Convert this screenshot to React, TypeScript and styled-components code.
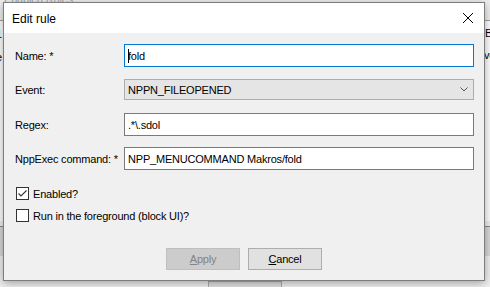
import styled, { createGlobalStyle } from "styled-components";

const GlobalStyle = createGlobalStyle`
    html, body {
        margin: 0;
        padding: 0;
        width: 490px;
        height: 287px;
        overflow: hidden;
        background: #f0f0f0;
        font-family: "Segoe UI", "Liberation Sans", sans-serif;
        font-size: 11px;
        letter-spacing: -0.2px;
        color: #000;
    }
`;

const Screen = styled.div`
    position: relative;
    width: 490px;
    height: 287px;
    overflow: hidden;
    background: #f0f0f0;
`;

// parent window fragments peeking from behind the dialog
const Behind = styled.div`
    position: absolute;
    inset: 0;
`;

const BehindText = styled.span<{ $x: number; $y: number; $color?: string }>`
    position: absolute;
    left: ${p => p.$x}px;
    top: ${p => p.$y}px;
    color: ${p => p.$color || "#000"};
    white-space: nowrap;
    line-height: 14px;
`;

const BehindLine = styled.div<{ $y: number }>`
    position: absolute;
    left: 0;
    right: 0;
    top: ${p => p.$y}px;
    height: 1px;
    background: #8a8a8a;
`;

const BehindPanel = styled.div`
    position: absolute;
    left: 0;
    top: 227px;
    width: 100%;
    height: 29px;
    background: #d9d9d9;
`;

const BehindList = styled.div`
    position: absolute;
    left: 0;
    top: 20px;
    width: 100%;
    height: 200px;
    background: #fff;
    border-top: 1px solid #a0a0a0;
`;

const BehindButton = styled.div`
    position: absolute;
    left: 208px;
    top: 281px;
    width: 72px;
    height: 22px;
    border: 1px solid #adadad;
    background: #e1e1e1;
    text-align: center;
    line-height: 20px;
`;

const Dialog = styled.div`
    position: absolute;
    left: 3px;
    top: 2px;
    width: 480px;
    height: 277px;
    border: 1px solid #7d7d7d;
    background: #f0f0f0;
    box-shadow: 0 2px 9px rgba(0, 0, 0, 0.35);
    display: flex;
    flex-direction: column;
`;

const TitleBar = styled.div`
    height: 30px;
    background: #fff;
    display: flex;
    align-items: center;
    justify-content: space-between;
    padding: 0 10px 0 8px;
    flex-shrink: 0;
`;

const Title = styled.span`
    font-size: 12px;
    letter-spacing: 0;
    padding-top: 1px;
`;

const Body = styled.div`
    display: flex;
    flex-direction: column;
    padding: 0 10px 0 11px;
`;

const Row = styled.div<{ $top: number; $height: number }>`
    display: flex;
    align-items: center;
    margin-top: ${p => p.$top}px;
    height: ${p => p.$height}px;
`;

const Label = styled.label`
    width: 109px;
    flex-shrink: 0;
    color: #000;
    white-space: nowrap;
`;

const Field = styled.div<{ $focused?: boolean }>`
    width: 350px;
    height: 23px;
    box-sizing: border-box;
    border: 1px solid ${p => (p.$focused ? "#0078d7" : "#7a7a7a")};
    background: #fff;
    display: flex;
    align-items: center;
    padding: 0 3px;
    white-space: nowrap;
`;

const Caret = styled.span`
    display: inline-block;
    width: 1px;
    height: 14px;
    background: #000;
    margin-right: -1px;
`;

const Combo = styled.div`
    width: 350px;
    height: 21px;
    box-sizing: border-box;
    border: 1px solid #adadad;
    background: #e5e5e5;
    display: flex;
    align-items: center;
    justify-content: space-between;
    padding: 0 5px 0 3px;
`;

const CheckRow = styled.label<{ $top: number }>`
    display: flex;
    align-items: center;
    gap: 4px;
    margin-top: ${p => p.$top}px;
    margin-left: 1px;
    height: 13px;
    white-space: nowrap;
`;

const Box = styled.span`
    width: 13px;
    height: 13px;
    box-sizing: border-box;
    border: 1px solid #333;
    background: #fff;
    display: flex;
    align-items: center;
    justify-content: center;
`;

const Buttons = styled.div`
    display: flex;
    justify-content: center;
    gap: 8px;
    margin-top: 26px;
    padding-right: 1px;
`;

const Button = styled.button<{ $disabled?: boolean }>`
    width: 74px;
    height: 22px;
    box-sizing: border-box;
    border: 1px solid ${p => (p.$disabled ? "#bfbfbf" : "#adadad")};
    background: ${p => (p.$disabled ? "#cccccc" : "#e1e1e1")};
    color: ${p => (p.$disabled ? "#838383" : "#000")};
    font-family: inherit;
    font-size: 11px;
    letter-spacing: -0.2px;
    padding: 0;
`;

export default function App() {
    return (
        <Screen>
            <GlobalStyle />
            <Behind>
                <BehindText $x={4} $y={-8} $color="#a8a8a8">Enabled Rules</BehindText>
                <BehindList />
                <BehindText $x={-4} $y={27}>1</BehindText>
                <BehindText $x={-4} $y={50}>e</BehindText>
                <BehindText $x={485} $y={26}>B</BehindText>
                <BehindText $x={484} $y={48}>ve</BehindText>
                <BehindLine $y={226} />
                <BehindPanel />
                <BehindButton>Close</BehindButton>
            </Behind>

            <Dialog>
                <TitleBar>
                    <Title>Edit rule</Title>
                    <svg width="12" height="12" viewBox="0 0 12 12">
                        <path d="M1 1 L11 11 M11 1 L1 11" stroke="#000" strokeWidth="1" fill="none" />
                    </svg>
                </TitleBar>

                <Body>
                    <Row $top={11} $height={23}>
                        <Label>Name: *</Label>
                        <Field $focused><Caret />fold</Field>
                    </Row>
                    <Row $top={12} $height={21}>
                        <Label>Event:</Label>
                        <Combo>
                            <span>NPPN_FILEOPENED</span>
                            <svg width="8" height="5" viewBox="0 0 8 5">
                                <path d="M0.5 0.5 L4 4 L7.5 0.5" stroke="#555" strokeWidth="1" fill="none" />
                            </svg>
                        </Combo>
                    </Row>
                    <Row $top={13} $height={23}>
                        <Label>Regex:</Label>
                        <Field>.*\.sdol</Field>
                    </Row>
                    <Row $top={11} $height={23}>
                        <Label>NppExec command: *</Label>
                        <Field>NPP_MENUCOMMAND Makros/fold</Field>
                    </Row>

                    <CheckRow $top={17}>
                        <Box>
                            <svg width="11" height="11" viewBox="0 0 11 11">
                                <path d="M1.5 5.5 L4 8 L9.5 2.5" stroke="#333" strokeWidth="1.1" fill="none" />
                            </svg>
                        </Box>
                        Enabled?
                    </CheckRow>
                    <CheckRow $top={9}>
                        <Box />
                        Run in the foreground (block UI)?
                    </CheckRow>

                    <Buttons>
                        <Button $disabled disabled><u>A</u>pply</Button>
                        <Button><u>C</u>ancel</Button>
                    </Buttons>
                </Body>
            </Dialog>
        </Screen>
    );
}
